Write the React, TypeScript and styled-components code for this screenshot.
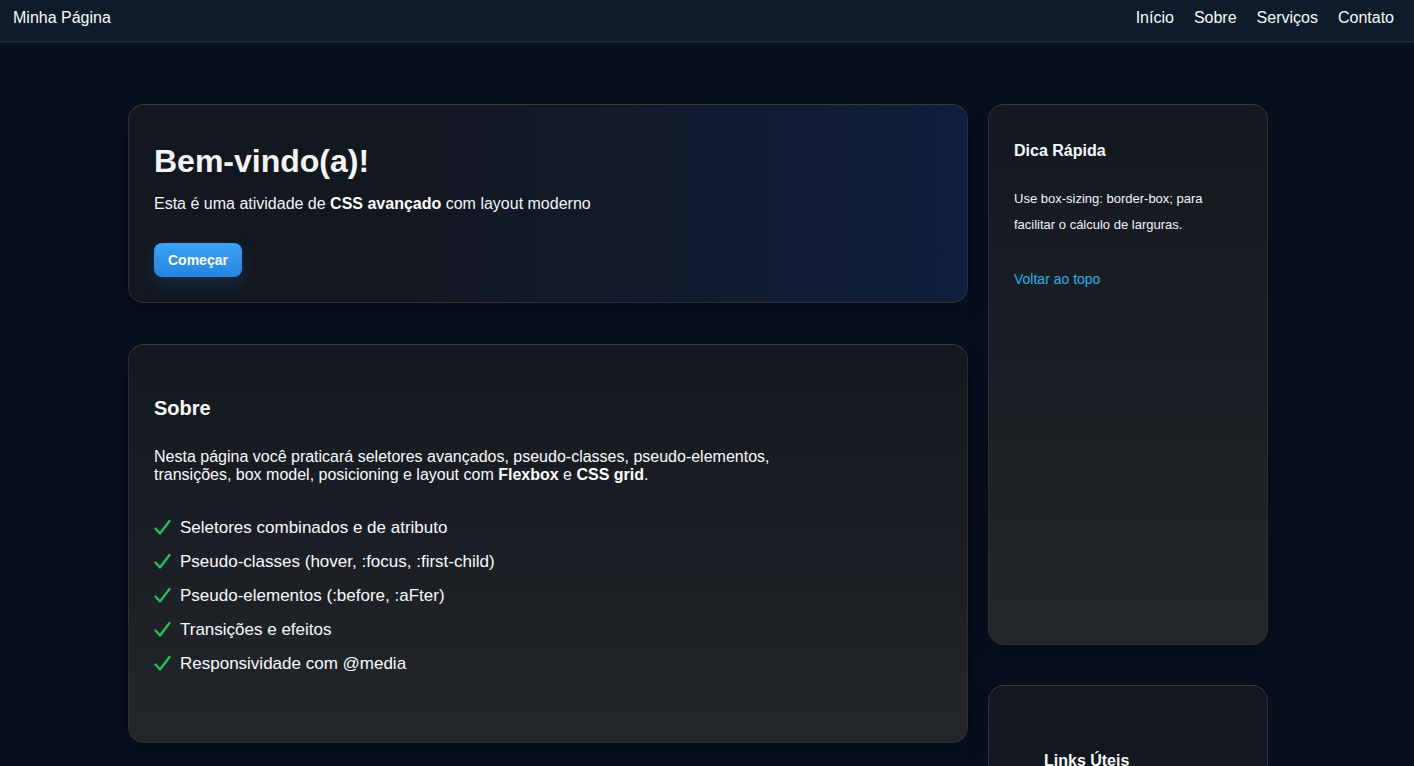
import React from "react";
import styled, { createGlobalStyle } from "styled-components";

const Global = createGlobalStyle`
  * { box-sizing: border-box; }
  html, body { margin: 0; padding: 0; }
  body {
    background: #08101f;
    color: #f3f4f6;
    font-family: "Liberation Sans", Arial, sans-serif;
    min-height: 766px;
  }
`;

const Header = styled.header`
  height: 43px;
  background: #0f1a2a;
  border-bottom: 2px solid #1a2434;
  display: flex;
  align-items: center;
  justify-content: space-between;
  padding: 0 20px 6px 13px;
`;

const Brand = styled.div`
  font-size: 16px;
  color: #f8fafc;
`;

const Nav = styled.nav`
  display: flex;
  gap: 20px;
`;

const NavLink = styled.a`
  font-size: 16px;
  color: #f8fafc;
  text-decoration: none;
`;

const Main = styled.main`
  display: grid;
  grid-template-columns: 840px 280px;
  gap: 20px;
  margin: 61px 0 0 128px;
  width: 1140px;
  align-items: start;
`;

const Column = styled.div<{ $gap: number }>`
  display: flex;
  flex-direction: column;
  gap: ${(p) => p.$gap}px;
`;

const Card = styled.section<{ $grad: "hero" | "vertical" | "plain"; $h?: number }>`
  border: 1px solid #2c3036;
  border-top-color: #3a3e37;
  border-radius: 16px;
  box-shadow: 0 6px 18px rgba(0, 0, 0, 0.35);
  min-height: ${(p) => (p.$h ? `${p.$h}px` : "auto")};
  background: ${(p) =>
    p.$grad === "hero"
      ? "linear-gradient(90deg, #13171f 0%, #13171f 30%, #101f3d 100%)"
      : p.$grad === "vertical"
      ? "linear-gradient(180deg, #13171f 0%, #23272b 100%)"
      : "#13171f"};
`;

const HeroBody = styled.div`
  padding: 38px 25px 25px;
`;

const Title = styled.h1`
  margin: 0 0 15px;
  font-size: 32px;
  font-weight: 700;
  color: #f5f5f5;
  line-height: 1.15;
`;

const Lead = styled.p`
  margin: 0 0 30px;
  font-size: 16px;
  color: #f1f5f9;
  strong { color: #fff; }
`;

const Button = styled.button`
  height: 34px;
  padding: 0 14px;
  border: none;
  border-radius: 8px;
  background: linear-gradient(180deg, #3aa3f7 0%, #2683e0 100%);
  color: #fff;
  font-family: inherit;
  font-size: 14px;
  font-weight: 700;
  box-shadow: 0 6px 18px rgba(38, 131, 224, 0.22);
  cursor: pointer;
`;

const SobreBody = styled.div`
  padding: 52px 25px 60px;
`;

const H2 = styled.h2`
  margin: 0 0 28px;
  font-size: 20px;
  font-weight: 700;
  color: #f8fafc;
`;

const Para = styled.p`
  margin: 0 0 27px;
  max-width: 640px;
  font-size: 16px;
  line-height: 18px;
  color: #f8fafc;
  strong { color: #fff; }
`;

const List = styled.ul`
  list-style: none;
  margin: 0;
  padding: 0;
  display: flex;
  flex-direction: column;
`;

const Item = styled.li`
  display: flex;
  align-items: center;
  gap: 9px;
  height: 34px;
  font-size: 17px;
  color: #f8fafc;
`;

const CheckIcon = styled.svg`
  width: 17px;
  height: 17px;
  flex: none;
  color: #22c55e;
`;

const AsideBody = styled.div<{ $pad?: string }>`
  padding: ${(p) => p.$pad || "37px 25px 24px"};
`;

const H3 = styled.h3`
  margin: 0 0 26px;
  font-size: 16px;
  font-weight: 700;
  color: #f8fafc;
`;

const Small = styled.p`
  margin: 0 0 32px;
  font-size: 13px;
  line-height: 26px;
  color: #f1f5f9;
`;

const Link = styled.a`
  font-size: 14px;
  color: #22b0f0;
  text-decoration: none;
`;

const items = [
  "Seletores combinados e de atributo",
  "Pseudo-classes (hover, :focus, :first-child)",
  "Pseudo-elementos (:before, :aFter)",
  "Transições e efeitos",
  "Responsividade com @media",
];

function Check() {
  return (
    <CheckIcon viewBox="0 0 17 17" aria-hidden="true">
      <path
        d="M1.5 9.5 L6 14.5 L15.5 2"
        fill="none"
        stroke="currentColor"
        strokeWidth="2.2"
        strokeLinecap="round"
        strokeLinejoin="round"
      />
    </CheckIcon>
  );
}

export default function App() {
  return (
    <>
      <Global />
      <Header>
        <Brand>Minha Página</Brand>
        <Nav>
          <NavLink href="#">Início</NavLink>
          <NavLink href="#">Sobre</NavLink>
          <NavLink href="#">Serviços</NavLink>
          <NavLink href="#">Contato</NavLink>
        </Nav>
      </Header>
      <Main>
        <Column $gap={41}>
          <Card $grad="hero">
            <HeroBody>
              <Title>Bem-vindo(a)!</Title>
              <Lead>
                Esta é uma atividade de <strong>CSS avançado</strong> com layout moderno
              </Lead>
              <Button>Começar</Button>
            </HeroBody>
          </Card>
          <Card $grad="vertical" $h={399}>
            <SobreBody>
              <H2>Sobre</H2>
              <Para>
                Nesta página você praticará seletores avançados, pseudo-classes, pseudo-elementos,
                transições, box model, posicioning e layout com <strong>Flexbox</strong> e{" "}
                <strong>CSS grid</strong>.
              </Para>
              <List>
                {items.map((t) => (
                  <Item key={t}>
                    <Check />
                    {t}
                  </Item>
                ))}
              </List>
            </SobreBody>
          </Card>
        </Column>
        <Column $gap={40}>
          <Card $grad="vertical" $h={541}>
            <AsideBody>
              <H3>Dica Rápida</H3>
              <Small>
                Use box-sizing: border-box; para facilitar o cálculo de larguras.
              </Small>
              <Link href="#">Voltar ao topo</Link>
            </AsideBody>
          </Card>
          <Card $grad="plain" $h={200}>
            <AsideBody $pad="66px 25px 24px 55px">
              <H3>Links Úteis</H3>
            </AsideBody>
          </Card>
        </Column>
      </Main>
    </>
  );
}
